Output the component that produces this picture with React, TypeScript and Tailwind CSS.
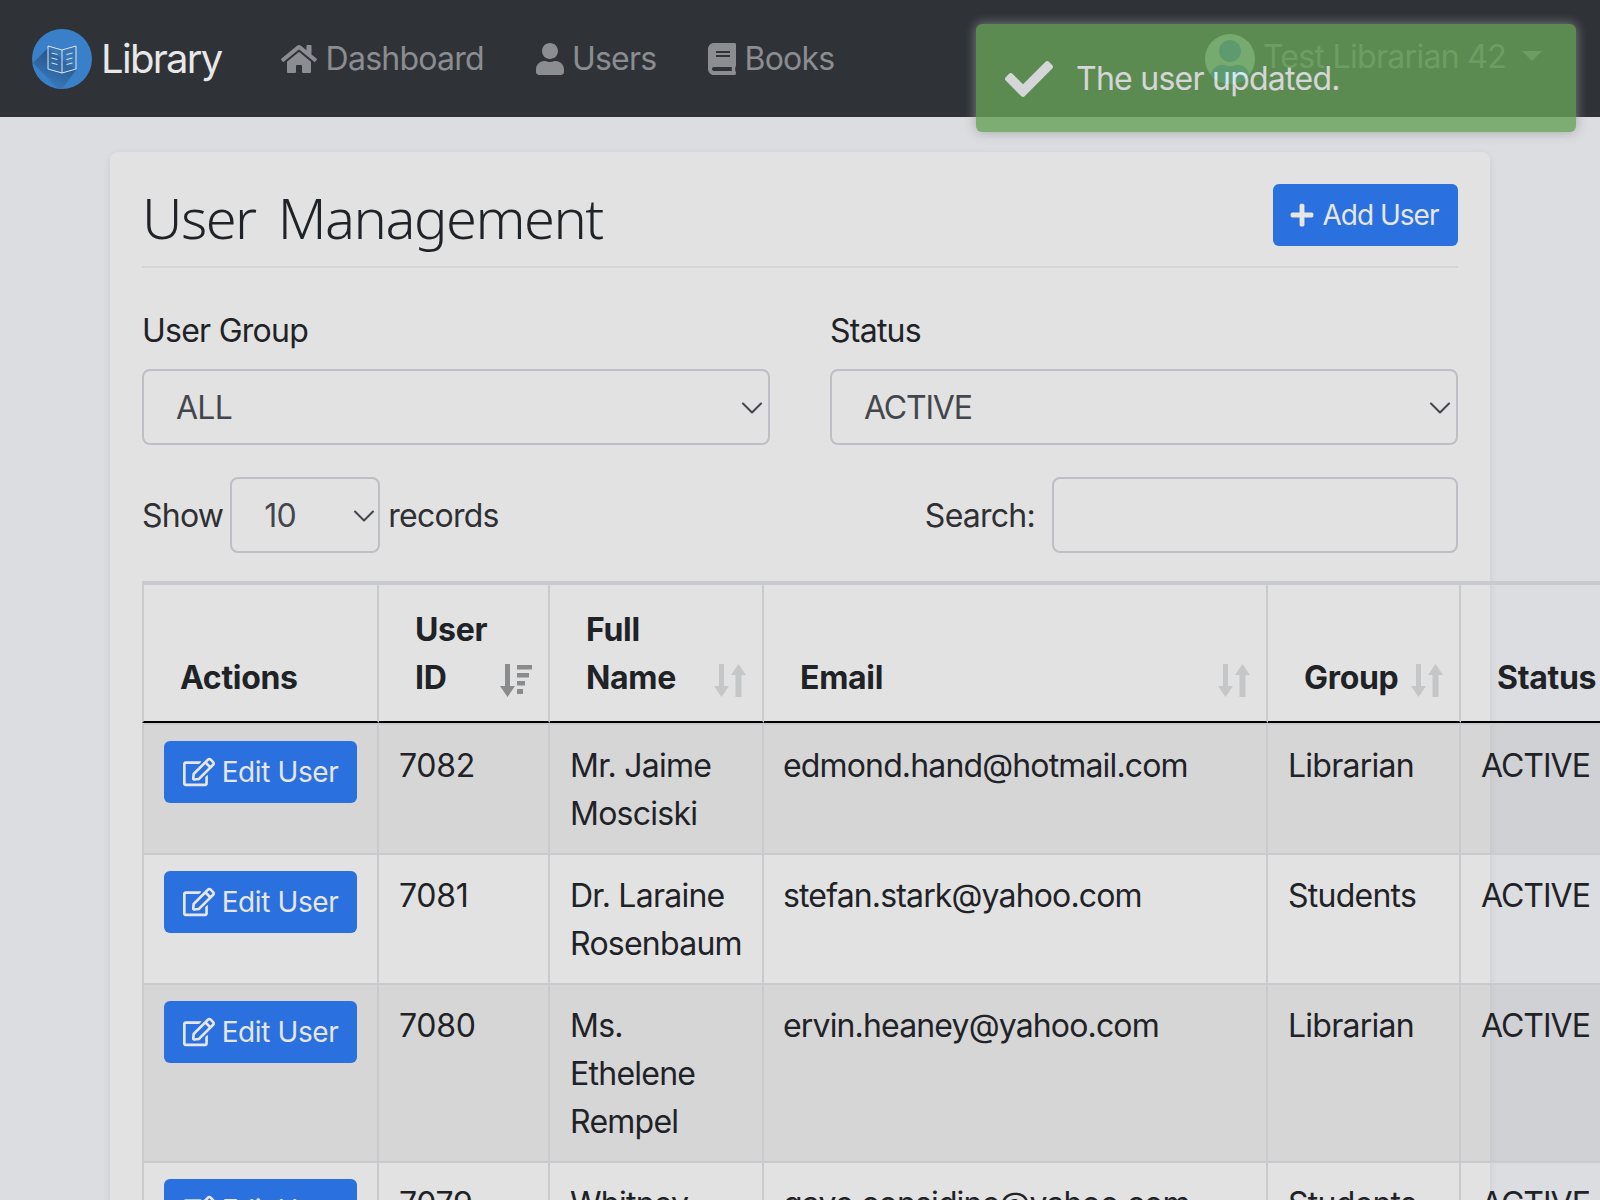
import React from 'react';
import { FaBook, FaCheck, FaHome, FaPlus, FaRegEdit, FaUser } from 'react-icons/fa';

const users = [
  { id: 7082, name: 'Mr. Jaime Mosciski', email: 'edmond.hand@hotmail.com', group: 'Librarian' },
  { id: 7081, name: 'Dr. Laraine Rosenbaum', email: 'stefan.stark@yahoo.com', group: 'Students' },
  { id: 7080, name: 'Ms. Ethelene Rempel', email: 'ervin.heaney@yahoo.com', group: 'Librarian' },
  { id: 7079, name: 'Whitney', email: 'gaye.considine@yahoo.com', group: 'Students' },
];

function Logo() {
  return (
    <svg width="60" height="60" viewBox="0 0 60 60" className="shrink-0">
      <defs>
        <linearGradient id="logoShade" x1="0.7" y1="0.1" x2="0.25" y2="1">
          <stop offset="0" stopColor="#24507f" />
          <stop offset="1" stopColor="#3a7fc6" />
        </linearGradient>
        <clipPath id="logoClip">
          <circle cx="30" cy="30" r="30" />
        </clipPath>
      </defs>
      <circle cx="30" cy="30" r="30" fill="#3a80c8" />
      <polygon points="16,19 1,34 26,60 30,60 44,41" fill="url(#logoShade)" clipPath="url(#logoClip)" />
      <path d="M16 17l14 4 14-4v23l-14 4-14-4z" fill="#3570ad" fillOpacity="0.6" stroke="#dbe6f2" strokeWidth="1" />
      <path d="M30 21v23" stroke="#dbe6f2" strokeWidth="1" />
      <path d="M19.500 24l6 1.500M19.500 29l6 1.500M19.500 34l6 1.500M40.500 24l-6 1.500M40.500 29l-6 1.500M40.500 34l-6 1.500" stroke="#dbe6f2" strokeWidth="1" />
    </svg>
  );
}

function Chevron() {
  return (
    <svg width="24" height="24" viewBox="0 0 16 16" fill="none" stroke="#43474d" strokeWidth="1.4" strokeLinecap="round" strokeLinejoin="round">
      <path d="M2 5l6 6 6-6" />
    </svg>
  );
}

function SortIcon({ active }: { active?: boolean }) {
  if (active) {
    return (
      <svg width="32" height="33" viewBox="0 0 32 33" fill="#8a8b8d" className="mb-[5px] shrink-0">
        <path d="M5 0h5v22h5l-7.500 11L0 22h5z" />
        <path d="M17 1h15v4.500H17zM17 9h12v4.500H17zM17 17h8v4.500h-8zM17 25h6v5h-6z" />
      </svg>
    );
  }
  return (
    <svg width="32" height="33" viewBox="0 0 32 33" fill="#c5c6c7" className="mb-[5px] shrink-0">
      <path d="M5 0h5v22h5l-7.500 11L0 22h5z" />
      <path d="M21.500 33h6V11H32L24.500 0 17 11h4.500z" />
    </svg>
  );
}

function HeaderCell({ children, sort, active }: { children: React.ReactNode; sort?: boolean; active?: boolean }) {
  return (
    <th className="border-t-4 border-r-2 border-b-2 border-t-[#c9cacd] border-r-[#c9cacd] border-b-black pt-[21px] pr-[16px] pb-[19px] pl-9 align-bottom tracking-[-0.3px] first:border-l-2 first:border-l-[#c9cacd]">
      <div className="flex items-end justify-between text-left font-bold">
        <span>{children}</span>
        {sort && <SortIcon active={active} />}
      </div>
    </th>
  );
}

function BodyCell({ children }: { children: React.ReactNode }) {
  return (
    <td className="border-r-2 border-b-2 border-[#c9cacd] px-5 pt-[17px] pb-[15px] align-top group-first:border-t-2 first:border-l-2">
      {children}
    </td>
  );
}

export default function App() {
  return (
    <div className="relative h-[1200px] overflow-hidden bg-[#dcdde0] font-['Inter',sans-serif] text-[32px] leading-[48px] tracking-[-0.75px] text-[#1f2226]">
      {/* Navbar */}
      <nav className="flex h-[117px] items-center bg-[#2f3338] pr-[58px] pl-8 text-[#8b8d90]">
        <Logo />
        <span className="ml-[9px] text-[40px] tracking-[-1.7px] text-[#e8e8e8]">Library</span>
        <a className="ml-[59px] flex items-center gap-[9px]">
          <FaHome size={36} />
          Dashboard
        </a>
        <a className="ml-[50px] flex items-center gap-[6px]">
          <FaUser size={32} />
          Users
        </a>
        <a className="ml-[50px] flex items-center gap-[6px]">
          <FaBook size={32} />
          Books
        </a>
        <div className="ml-auto flex items-center">
          <span className="flex h-[50px] w-[50px] items-end justify-center overflow-hidden rounded-full bg-[#c0cfd0] text-[#3a7fd0]">
            <FaUser size={44} />
          </span>
          <span className="-mt-[4px] ml-[8px] tracking-[-0.7px]">Test Librarian 42</span>
          <span className="mb-[6px] ml-[16px] h-0 w-0 border-x-[10px] border-t-[10px] border-x-transparent border-t-[#8b8d90]" />
        </div>
      </nav>

      {/* Toast */}
      <div className="absolute top-6 right-[24px] flex h-[108px] w-[600px] items-start rounded-[6px] bg-[#66a258] pt-[31px] pl-[29px] text-white opacity-80 shadow-[0_0_12px_#999999]">
        <FaCheck size={48} />
        <span className="ml-[23px]">The user updated.</span>
      </div>

      {/* Card */}
      <main className="mt-[35px] ml-[110px] w-[1380px] rounded-[8px] bg-[#e2e2e2] p-8 shadow-[0_2px_8px_rgba(0,0,0,0.08)]">
        <div className="flex h-[84px] items-start justify-between border-b-2 border-[#d6d6d6]">
          <h1 className="font-['Noto_Sans',sans-serif] text-[56px] leading-[66px] font-light tracking-[-1.5px] [word-spacing:9px]">User Management</h1>
          <button className="flex h-[62px] w-[185px] items-center justify-center gap-[8px] rounded-[6px] bg-[#2a70df] pr-[4px] text-[28px] tracking-[-1px] text-[#e6e6e6]">
            <FaPlus size={26} />
            Add User
          </button>
        </div>

        <div className="mt-[39px] grid grid-cols-2 gap-x-[60px]">
          <div>
            <div className="mb-[14px]">User Group</div>
            <div className="flex h-[76px] items-center justify-between rounded-[8px] border-2 border-[#bcbfc3] pt-[2px] pr-[4px] pl-[32px] text-[#43474d]">
              ALL
              <Chevron />
            </div>
          </div>
          <div>
            <div className="mb-[14px]">Status</div>
            <div className="flex h-[76px] items-center justify-between rounded-[8px] border-2 border-[#bcbfc3] pt-[2px] pr-[4px] pl-[32px] tracking-[-1.2px] text-[#43474d]">
              ACTIVE
              <Chevron />
            </div>
          </div>
        </div>

        <div className="mt-8 flex items-center justify-between text-[#2f3033]">
          <div className="flex items-center pt-[2px]">
            Show
            <div className="-mt-[2px] mr-[8px] ml-[7px] flex h-[76px] w-[150px] items-center justify-between rounded-[8px] border-2 border-[#bcbfc3] pt-[2px] pr-[2px] pl-[32px] text-[#43474d]">
              10
              <Chevron />
            </div>
            records
          </div>
          <div className="flex items-center pt-[2px]">
            Search:
            <input className="-mt-[2px] ml-[17px] h-[76px] w-[406px] rounded-[8px] border-2 border-[#bcbfc3] bg-transparent" />
          </div>
        </div>

        <table className="mt-7 w-[1568px] table-fixed border-separate border-spacing-0">
          <colgroup>
            <col className="w-[237px]" />
            <col className="w-[171px]" />
            <col className="w-[214px]" />
            <col className="w-[504px]" />
            <col className="w-[193px]" />
            <col className="w-[249px]" />
          </colgroup>
          <thead>
            <tr>
              <HeaderCell>Actions</HeaderCell>
              <HeaderCell sort active>User<br />ID</HeaderCell>
              <HeaderCell sort>Full<br />Name</HeaderCell>
              <HeaderCell sort>Email</HeaderCell>
              <HeaderCell sort>Group</HeaderCell>
              <HeaderCell>Status</HeaderCell>
            </tr>
          </thead>
          <tbody>
            {users.map((user, i) => (
              <tr key={user.id} className={`group ${i % 2 === 0 ? 'bg-black/5' : ''}`}>
                <BodyCell>
                  <button className="-mt-px flex h-[62px] w-[193px] items-center justify-center gap-[7px] rounded-[6px] bg-[#2a70df] text-[28px] tracking-[-0.4px] text-[#e6e6e6]">
                    <FaRegEdit size={32} />
                    Edit User
                  </button>
                </BodyCell>
                <BodyCell>
                  <span className="tracking-[-0.3px]">{user.id}</span>
                </BodyCell>
                <BodyCell>{user.name}</BodyCell>
                <BodyCell>
                  <span className="-ml-px tracking-[-0.85px]">{user.email}</span>
                </BodyCell>
                <BodyCell>{user.group}</BodyCell>
                <BodyCell>
                  <span className="tracking-[-1px]">ACTIVE</span>
                </BodyCell>
              </tr>
            ))}
          </tbody>
        </table>
      </main>
    </div>
  );
}
